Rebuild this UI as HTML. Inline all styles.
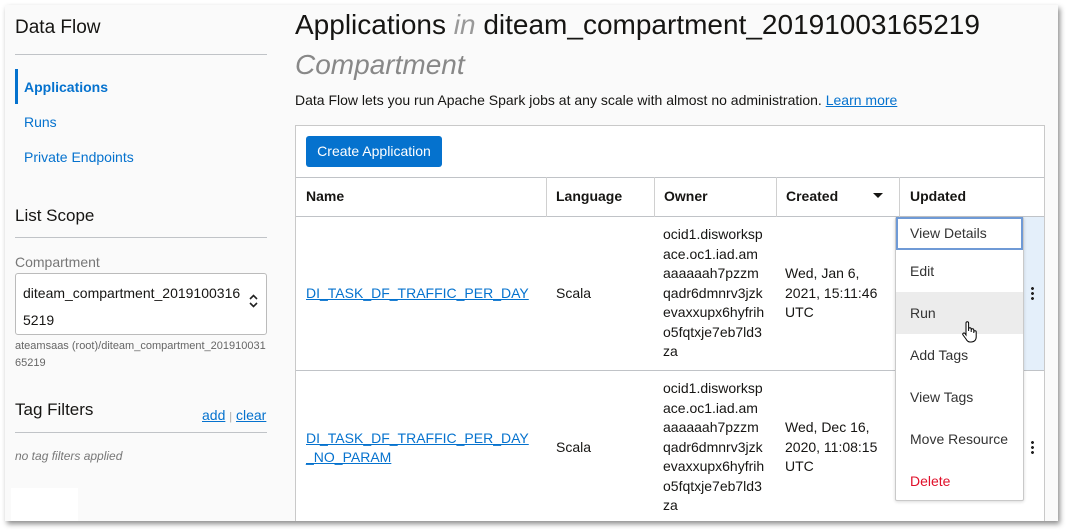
<!DOCTYPE html>
<html><head><style>
*{margin:0;padding:0;box-sizing:border-box}
body{width:1067px;height:530px;background:#fff;font-family:"Liberation Sans",sans-serif;position:relative;overflow:hidden;color:#161513}
.frame{position:absolute;left:5px;top:5px;width:1053px;height:516px;background:#fafafa;box-shadow:2px 3px 5px rgba(0,0,0,.45);overflow:hidden}
.a{position:absolute;white-space:nowrap}
.lnk{color:#0572ce}
.hr{position:absolute;height:1px;background:#c0c3c7}
.cell{position:absolute;font-size:14px;line-height:19.5px;color:#161513}
</style></head><body>
<div class="frame">
<div class="a" style="left:10px;top:12px;font-size:19px">Data Flow</div>
<div class="hr" style="left:10px;top:49px;width:252px"></div>
<div class="a" style="left:10px;top:64px;width:3px;height:35px;background:#0572ce"></div>
<div class="a lnk" style="left:19px;top:74px;font-size:14px;font-weight:bold">Applications</div>
<div class="a lnk" style="left:19px;top:109px;font-size:14px">Runs</div>
<div class="a lnk" style="left:19px;top:144px;font-size:14px">Private Endpoints</div>
<div class="a" style="left:10px;top:201px;font-size:17px">List Scope</div>
<div class="hr" style="left:10px;top:232px;width:252px"></div>
<div class="a" style="left:10px;top:249px;font-size:14px;color:#777">Compartment</div>
<div class="a" style="left:10px;top:268px;width:252px;height:62px;border:1px solid #bbb;border-radius:3px;background:#fff"></div>
<div class="a" style="left:18px;top:275px;font-size:14px;line-height:27px;white-space:normal;width:220px">diteam_compartment_2019100316<br>5219</div>
<svg class="a" style="left:244px;top:289px" width="9" height="14" viewBox="0 0 9 14"><path d="M1 5L4.5 1.5 8 5M1 9l3.5 3.5L8 9" fill="none" stroke="#222" stroke-width="1.6"/></svg>
<div class="a" style="left:10px;top:333px;font-size:11px;line-height:17px;color:#666">ateamsaas (root)/diteam_compartment_201910031<br>65219</div>
<div class="a" style="left:10px;top:395px;font-size:17px">Tag Filters</div>
<div class="a" style="left:197px;top:402px;font-size:14px"><span class="lnk" style="text-decoration:underline">add</span> <span style="color:#aaa;font-size:11px">|</span> <span class="lnk" style="text-decoration:underline">clear</span></div>
<div class="hr" style="left:10px;top:427px;width:252px"></div>
<div class="a" style="left:10px;top:444px;font-size:12px;font-style:italic;color:#777">no tag filters applied</div>
<div class="a" style="left:6px;top:483px;width:67px;height:33px;background:#fff"></div>
<div class="a" style="left:290px;top:4px;font-size:28px;color:#161513">Applications <i style="color:#999">in</i> diteam_compartment_20191003165219</div>
<div class="a" style="left:290px;top:44px;font-size:28px;font-style:italic;color:#888">Compartment</div>
<div class="a" style="left:290px;top:87px;font-size:14px">Data Flow lets you run Apache Spark jobs at any scale with almost no administration. <span class="lnk" style="text-decoration:underline">Learn more</span></div>
<div class="a" style="left:290px;top:120px;width:750px;height:420px;border:1px solid #c9c9c9;background:#fff"></div>
<div class="a" style="left:301px;top:131px;width:136px;height:31px;background:#0572ce;border-radius:3px;color:#fff;font-size:14px;line-height:31px;text-align:center">Create Application</div>
<div class="hr" style="left:291px;top:172px;width:748px"></div>
<div class="hr" style="left:291px;top:211px;width:748px"></div>
<div class="hr" style="left:291px;top:365px;width:748px"></div>
<div class="a" style="left:541px;top:172px;width:1px;height:40px;background:#d0d0d0"></div>
<div class="a" style="left:649px;top:172px;width:1px;height:40px;background:#d0d0d0"></div>
<div class="a" style="left:771px;top:172px;width:1px;height:40px;background:#d0d0d0"></div>
<div class="a" style="left:894px;top:172px;width:1px;height:40px;background:#d0d0d0"></div>
<div class="a" style="left:301px;top:183px;font-size:14px;font-weight:bold">Name</div>
<div class="a" style="left:551px;top:183px;font-size:14px;font-weight:bold">Language</div>
<div class="a" style="left:659px;top:183px;font-size:14px;font-weight:bold">Owner</div>
<div class="a" style="left:781px;top:183px;font-size:14px;font-weight:bold">Created</div>
<div class="a" style="left:868px;top:188px;width:0;height:0;border-left:5px solid transparent;border-right:5px solid transparent;border-top:5px solid #161513"></div>
<div class="a" style="left:905px;top:183px;font-size:14px;font-weight:bold">Updated</div>
<div class="a" style="left:1018px;top:212px;width:21px;height:153px;background:#e4effa"></div>
<div class="a lnk" style="left:301px;top:280px;font-size:14px;text-decoration:underline">DI_TASK_DF_TRAFFIC_PER_DAY</div>
<div class="a" style="left:551px;top:280px;font-size:14px">Scala</div>
<div class="cell" style="left:658px;top:220px">ocid1.disworksp<br>ace.oc1.iad.am<br>aaaaaah7pzzm<br>qadr6dmnrv3jzk<br>evaxxupx6hyfrih<br>o5fqtxje7eb7ld3<br>za</div>
<div class="cell" style="left:780px;top:259px">Wed, Jan 6,<br>2021, 15:11:46<br>UTC</div>
<div class="a" style="left:1026px;top:281px;width:3px;height:14px;background:radial-gradient(circle,#222 1.3px,transparent 1.6px) 0 0/3px 5px repeat-y"></div>
<div class="a lnk" style="left:301px;top:424px;font-size:14px;line-height:19px;text-decoration:underline">DI_TASK_DF_TRAFFIC_PER_DAY<br>_NO_PARAM</div>
<div class="a" style="left:551px;top:434px;font-size:14px">Scala</div>
<div class="cell" style="left:658px;top:374px">ocid1.disworksp<br>ace.oc1.iad.am<br>aaaaaah7pzzm<br>qadr6dmnrv3jzk<br>evaxxupx6hyfrih<br>o5fqtxje7eb7ld3<br>za</div>
<div class="cell" style="left:780px;top:413px">Wed, Dec 16,<br>2020, 11:08:15<br>UTC</div>
<div class="a" style="left:1026px;top:435px;width:3px;height:14px;background:radial-gradient(circle,#222 1.3px,transparent 1.6px) 0 0/3px 5px repeat-y"></div>
<div class="a" style="left:890px;top:212px;width:129px;height:284px;background:#fff;border:1px solid #c9c9c9;border-radius:2px;box-shadow:0 1px 3px rgba(0,0,0,.15)"></div>
<div class="a" style="left:891px;top:212px;width:127px;height:33px;border:2px solid #6f9ad6"></div>
<div class="a" style="left:891px;top:287px;width:127px;height:42px;background:#ececec"></div>
<div class="a" style="left:905px;top:220px;font-size:14px;color:#333">View Details</div>
<div class="a" style="left:905px;top:258px;font-size:14px;color:#333">Edit</div>
<div class="a" style="left:905px;top:300px;font-size:14px;color:#333">Run</div>
<div class="a" style="left:905px;top:342px;font-size:14px;color:#333">Add Tags</div>
<div class="a" style="left:905px;top:384px;font-size:14px;color:#333">View Tags</div>
<div class="a" style="left:905px;top:426px;font-size:14px;color:#333">Move Resource</div>
<div class="a" style="left:905px;top:468px;font-size:14px;color:#e0102a">Delete</div>
<svg class="a" style="left:956px;top:315px" width="18" height="24" viewBox="0 0 18 24"><path d="M5 13V3a1.3 1.3 0 0 1 2.6 0v8V9a1.3 1.3 0 0 1 2.6 0v3V10a1.3 1.3 0 0 1 2.6 0v3V12a1.2 1.2 0 0 1 2.4 0v5c0 3-2 5-5 5H9c-2 0-3-1-4-3l-3-4a1.2 1.2 0 0 1 2-1.5L5 15z" fill="#fff" stroke="#000" stroke-width="1"/></svg>
</div>
</body></html>
